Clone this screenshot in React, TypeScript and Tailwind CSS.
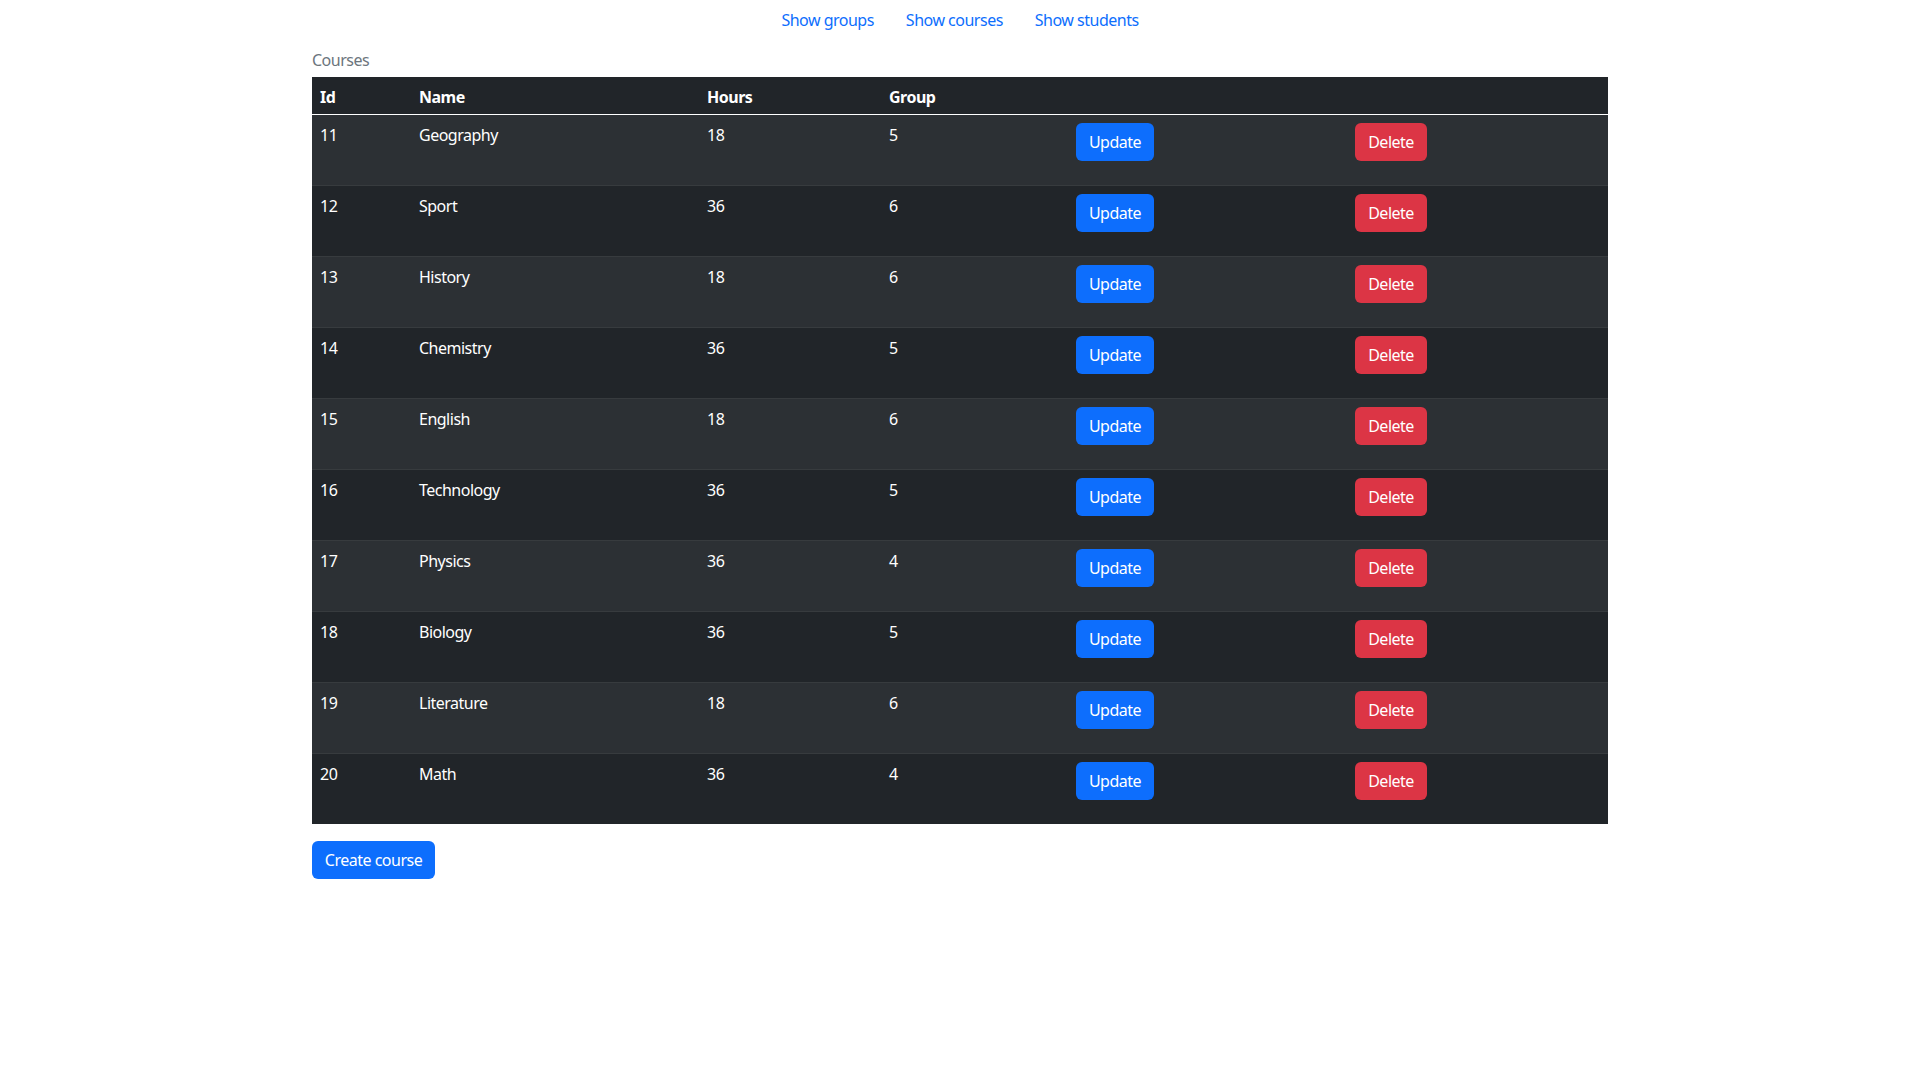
type Course = {
  id: number
  name: string
  hours: number
  group: number
}

const courses: Course[] = [
  { id: 11, name: 'Geography', hours: 18, group: 5 },
  { id: 12, name: 'Sport', hours: 36, group: 6 },
  { id: 13, name: 'History', hours: 18, group: 6 },
  { id: 14, name: 'Chemistry', hours: 36, group: 5 },
  { id: 15, name: 'English', hours: 18, group: 6 },
  { id: 16, name: 'Technology', hours: 36, group: 5 },
  { id: 17, name: 'Physics', hours: 36, group: 4 },
  { id: 18, name: 'Biology', hours: 36, group: 5 },
  { id: 19, name: 'Literature', hours: 18, group: 6 },
  { id: 20, name: 'Math', hours: 36, group: 4 },
]

function App() {
  return (
    <div className="min-h-screen bg-white font-['Noto_Sans','Open_Sans',sans-serif] text-base leading-6 tracking-[-0.5px] text-[#212529]">
      <ul className="flex justify-center">
        <li>
          <a href="#" className="block px-4 py-2 text-[#0d6efd]">
            Show groups
          </a>
        </li>
        <li>
          <a href="#" className="block px-4 py-2 text-[#0d6efd]">
            Show courses
          </a>
        </li>
        <li>
          <a href="#" className="block px-4 py-2 text-[#0d6efd]">
            Show students
          </a>
        </li>
      </ul>

      <div className="mx-auto w-[1296px]">
        <table className="w-full table-fixed border-collapse bg-[#212529] text-left text-white">
          <caption className="caption-top bg-white pt-2 pb-[5px] text-left text-[#6c757d]">
            Courses
          </caption>
          <thead>
            <tr className="h-[37px] border-b border-white">
              <th className="w-[99px] px-2 pt-[3px] align-middle font-bold">Id</th>
              <th className="w-[288px] px-2 pt-[3px] align-middle font-bold">Name</th>
              <th className="w-[182px] px-2 pt-[3px] align-middle font-bold">Hours</th>
              <th className="w-[187px] px-2 pt-[3px] align-middle font-bold">Group</th>
              <th className="w-[279px] px-2"></th>
              <th className="w-[261px] px-2"></th>
            </tr>
          </thead>
          <tbody>
            {courses.map((course, i) => (
              <tr
                key={course.id}
                className={`h-[71px] border-b border-[#373b3e] last:border-b-0 ${
                  i % 2 === 0 ? 'bg-[#2c3034]' : 'bg-[#212529]'
                }`}
              >
                <td className="px-2 pt-2 align-top">{course.id}</td>
                <td className="px-2 pt-2 align-top">{course.name}</td>
                <td className="px-2 pt-2 align-top">{course.hours}</td>
                <td className="px-2 pt-2 align-top">{course.group}</td>
                <td className="px-2 pt-2 align-top">
                  <button className="h-[38px] w-[78px] rounded-md bg-[#0d6efd] text-center text-white">
                    Update
                  </button>
                </td>
                <td className="px-2 pt-2 align-top">
                  <button className="h-[38px] w-[72px] rounded-md bg-[#dc3545] text-center text-white">
                    Delete
                  </button>
                </td>
              </tr>
            ))}
          </tbody>
        </table>

        <button className="mt-[17px] h-[38px] w-[123px] rounded-md bg-[#0d6efd] text-center text-white">
          Create course
        </button>
      </div>
    </div>
  )
}

export default App
